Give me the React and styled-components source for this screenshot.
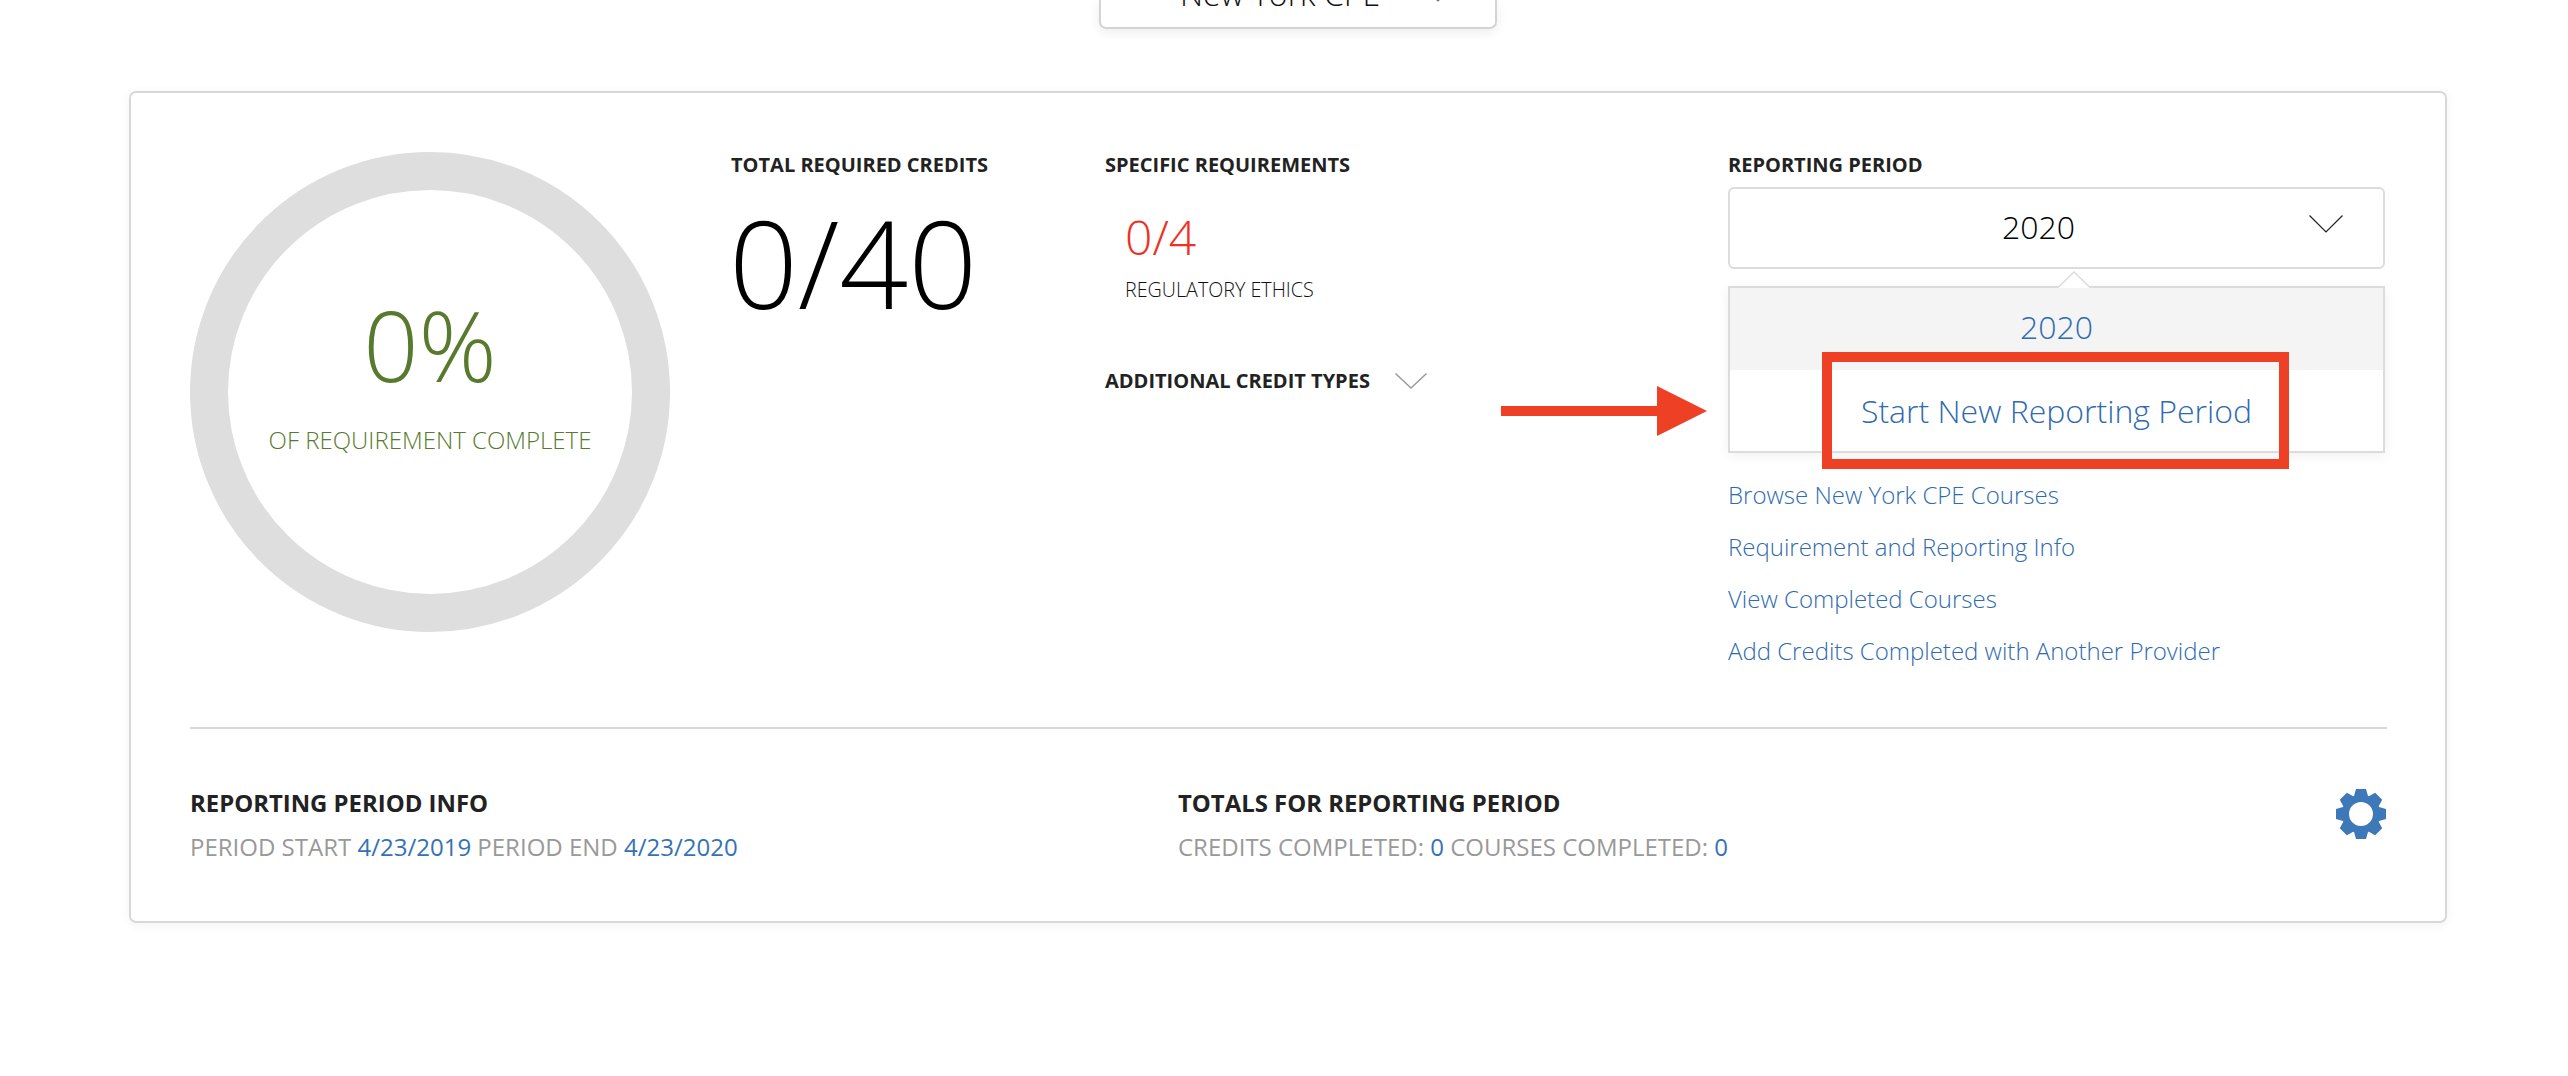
import React from 'react';
import styled, { createGlobalStyle } from 'styled-components';

const Global = createGlobalStyle`
  html, body { margin: 0; padding: 0; background: #fff; }
  body { font-family: "Open Sans", "Liberation Sans", sans-serif; color: #222; }
`;

const Page = styled.div`
  width: 2568px;
  height: 1076px;
  overflow: hidden;
  display: flex;
  flex-direction: column;
  align-items: center;
`;

const TopSelect = styled.div`
  box-sizing: border-box;
  position: relative;
  width: 398px;
  height: 29px;
  margin-left: 28px;
  border: 2px solid #d4d4d4;
  border-top: 0;
  border-radius: 0 0 7px 7px;
  box-shadow: 0 3px 12px rgba(0, 0, 0, 0.08);
  overflow: hidden;
  display: flex;
  justify-content: center;
  font-size: 32px;
  font-weight: 300;
  line-height: 44px;
  color: #111;
`;

const TopSelectText = styled.span`
  margin-top: -28px;
  margin-right: 36px;
`;

const TopChevron = styled.svg`
  position: absolute;
  right: 53px;
  top: 0;
`;

const Card = styled.section`
  box-sizing: border-box;
  width: 2318px;
  height: 832px;
  margin-top: 62px;
  margin-left: 8px;
  padding: 59px 58px 0 59px;
  border: 2px solid #d8d8d8;
  border-radius: 7px;
  box-shadow: 0 2px 12px rgba(0, 0, 0, 0.05);
`;

const TopRow = styled.div`
  display: flex;
  height: 575px;
  border-bottom: 2px solid #d8d8d8;
`;

const Donut = styled.div`
  box-sizing: border-box;
  width: 480px;
  height: 480px;
  margin-right: 61px;
  border: 38px solid #dedede;
  border-radius: 50%;
  display: flex;
  flex-direction: column;
  align-items: center;
  color: #587a2e;
  font-weight: 300;
`;

const DonutValue = styled.div`
  margin-top: 87px;
  font-size: 97px;
  line-height: 134px;
`;

const DonutLabel = styled.div`
  margin-top: 13px;
  font-size: 24px;
  line-height: 32px;
  white-space: nowrap;
`;

const Column = styled.div`
  width: ${({ $w }) => $w}px;
  flex: none;
`;

const Heading = styled.h3`
  margin: 0;
  font-size: 20px;
  font-weight: 700;
  line-height: 26px;
  color: #222;
  white-space: nowrap;
`;

const BigCount = styled.div`
  margin: 2px 0 0 -2px;
  font-size: 121px;
  font-weight: 300;
  line-height: 165px;
  color: #000;
`;

const Requirement = styled.div`
  margin: 25px 0 0 20px;
  font-weight: 300;
`;

const ReqCount = styled.div`
  font-size: 48px;
  line-height: 68px;
  color: #ee3124;
`;

const ReqName = styled.div`
  margin-top: 5px;
  font-size: 19.7px;
  line-height: 28px;
  color: #111;
`;

const MoreTypes = styled.div`
  display: flex;
  align-items: center;
  gap: 25px;
  margin-top: 64px;
`;

const ReportColumn = styled(Column)`
  position: relative;
`;

const Select = styled.div`
  box-sizing: border-box;
  height: 82px;
  margin-top: 9px;
  padding: 0 36px 4px 0;
  border: 2px solid #dcdcdc;
  border-radius: 6px;
  display: flex;
  align-items: center;
  justify-content: center;
  position: relative;
  font-size: 32px;
  font-weight: 300;
  color: #000;
`;

const SelectChevron = styled.svg`
  position: absolute;
  right: 40px;
  top: 26px;
`;

const Menu = styled.div`
  box-sizing: border-box;
  position: relative;
  height: 167px;
  margin-top: 17px;
  border: 2px solid #dcdcdc;
  box-shadow: 0 3px 12px rgba(0, 0, 0, 0.06);
  font-size: 32px;
  font-weight: 300;
  color: #2f6bb0;
`;

const MenuCaret = styled.svg`
  position: absolute;
  top: -17px;
  left: 327px;
`;

const MenuItem = styled.div`
  box-sizing: border-box;
  height: ${({ $h }) => $h}px;
  padding-bottom: ${({ $active }) => ($active ? 6 : 0)}px;
  display: flex;
  align-items: center;
  justify-content: center;
  background: ${({ $active }) => ($active ? '#f4f4f4' : '#fff')};
`;

const Highlight = styled.div`
  box-sizing: border-box;
  position: absolute;
  left: 94px;
  top: 200px;
  width: 467px;
  height: 117px;
  border: 10px solid #ee4024;
`;

const Arrow = styled.svg`
  position: absolute;
  left: -227px;
  top: 234px;
`;

const Links = styled.nav`
  display: flex;
  flex-direction: column;
  gap: 18px;
  margin-top: 25px;
`;

const NavLink = styled.a`
  font-size: 24px;
  font-weight: 300;
  line-height: 34px;
  color: #2f6bb0;
  text-decoration: none;
  white-space: nowrap;
`;

const BottomRow = styled.div`
  display: flex;
  align-items: flex-start;
  padding-top: 58px;
`;

const Info = styled.div`
  width: ${({ $w }) => $w}px;
  flex: none;
`;

const InfoTitle = styled.h4`
  margin: 0;
  font-size: 23.9px;
  font-weight: 700;
  line-height: 32px;
  color: #222;
  white-space: nowrap;
`;

const InfoLine = styled.div`
  margin-top: 12px;
  font-size: 24px;
  font-weight: 400;
  line-height: 32px;
  color: #999;
  white-space: nowrap;
`;

const Val = styled.span`
  color: #3572b5;
`;

const GearIcon = styled.svg`
  margin: 2px 1px 0 auto;
  flex: none;
`;

// 8 tooth cog, built from one tooth rotated round the centre
const gearPath = () => {
  const pts = [];
  for (let i = 0; i < 8; i++) {
    const a = (i * Math.PI) / 4;
    [[7, 18], [5, 25], [-5, 25], [-7, 18]].forEach(([x, y]) => {
      const px = 25 + x * Math.cos(a) - y * Math.sin(a);
      const py = 25 + x * Math.sin(a) + y * Math.cos(a);
      pts.push(`${px.toFixed(2)} ${py.toFixed(2)}`);
    });
  }
  return `M${pts.join('L')}Z M37 25a12 12 0 1 0 -24 0a12 12 0 1 0 24 0Z`;
};

const links = [
  'Browse New York CPE Courses',
  'Requirement and Reporting Info',
  'View Completed Courses',
  'Add Credits Completed with Another Provider',
];

export default function App() {
  return (
    <Page>
      <Global />
      <TopSelect>
        <TopSelectText>New York CPE</TopSelectText>
        <TopChevron width="8" height="3" viewBox="0 0 8 3" fill="none" stroke="#777" strokeWidth="1.2">
          <path d="M2 -1 L4 1 L6 -1" />
        </TopChevron>
      </TopSelect>
      <Card>
        <TopRow>
          <Donut>
            <DonutValue>0%</DonutValue>
            <DonutLabel>OF REQUIREMENT COMPLETE</DonutLabel>
          </Donut>
          <Column $w={374}>
            <Heading>TOTAL REQUIRED CREDITS</Heading>
            <BigCount>0/40</BigCount>
          </Column>
          <Column $w={623}>
            <Heading>SPECIFIC REQUIREMENTS</Heading>
            <Requirement>
              <ReqCount>0/4</ReqCount>
              <ReqName>REGULATORY ETHICS</ReqName>
            </Requirement>
            <MoreTypes>
              <Heading>ADDITIONAL CREDIT TYPES</Heading>
              <svg width="32" height="16" viewBox="0 0 32 16" fill="none" stroke="#999" strokeWidth="1.4">
                <path d="M0.5 0.5 L16 15 L31.5 0.5" />
              </svg>
            </MoreTypes>
          </Column>
          <ReportColumn $w={657}>
            <Heading>REPORTING PERIOD</Heading>
            <Select>
              2020
              <SelectChevron width="34" height="18" viewBox="0 0 34 18" fill="none" stroke="#222" strokeWidth="1.2">
                <path d="M0.5 0.5 L17 17 L33.5 0.5" />
              </SelectChevron>
            </Select>
            <Menu>
              <MenuCaret width="34" height="17" viewBox="0 0 34 17" fill="#fff" stroke="#dcdcdc" strokeWidth="1.5">
                <path d="M0.5 17 L17 1 L33.5 17" />
              </MenuCaret>
              <MenuItem $active $h={82}>2020</MenuItem>
              <MenuItem $h={81}>Start New Reporting Period</MenuItem>
            </Menu>
            <Highlight />
            <Arrow width="207" height="50" viewBox="0 0 207 50" fill="#ee4024">
              <path d="M0 20 H156 V0 L206 25 L156 50 V30 H0 Z" />
            </Arrow>
            <Links>
              {links.map((l) => (
                <NavLink key={l} href="#">{l}</NavLink>
              ))}
            </Links>
          </ReportColumn>
        </TopRow>
        <BottomRow>
          <Info $w={988}>
            <InfoTitle>REPORTING PERIOD INFO</InfoTitle>
            <InfoLine>
              PERIOD START <Val>4/23/2019</Val> PERIOD END <Val>4/23/2020</Val>
            </InfoLine>
          </Info>
          <Info $w={800}>
            <InfoTitle>TOTALS FOR REPORTING PERIOD</InfoTitle>
            <InfoLine>
              CREDITS COMPLETED: <Val>0</Val> COURSES COMPLETED: <Val>0</Val>
            </InfoLine>
          </Info>
          <GearIcon width="50" height="50" viewBox="0 0 50 50" fill="#3d78b9">
            <path fillRule="evenodd" d={gearPath()} />
          </GearIcon>
        </BottomRow>
      </Card>
    </Page>
  );
}
